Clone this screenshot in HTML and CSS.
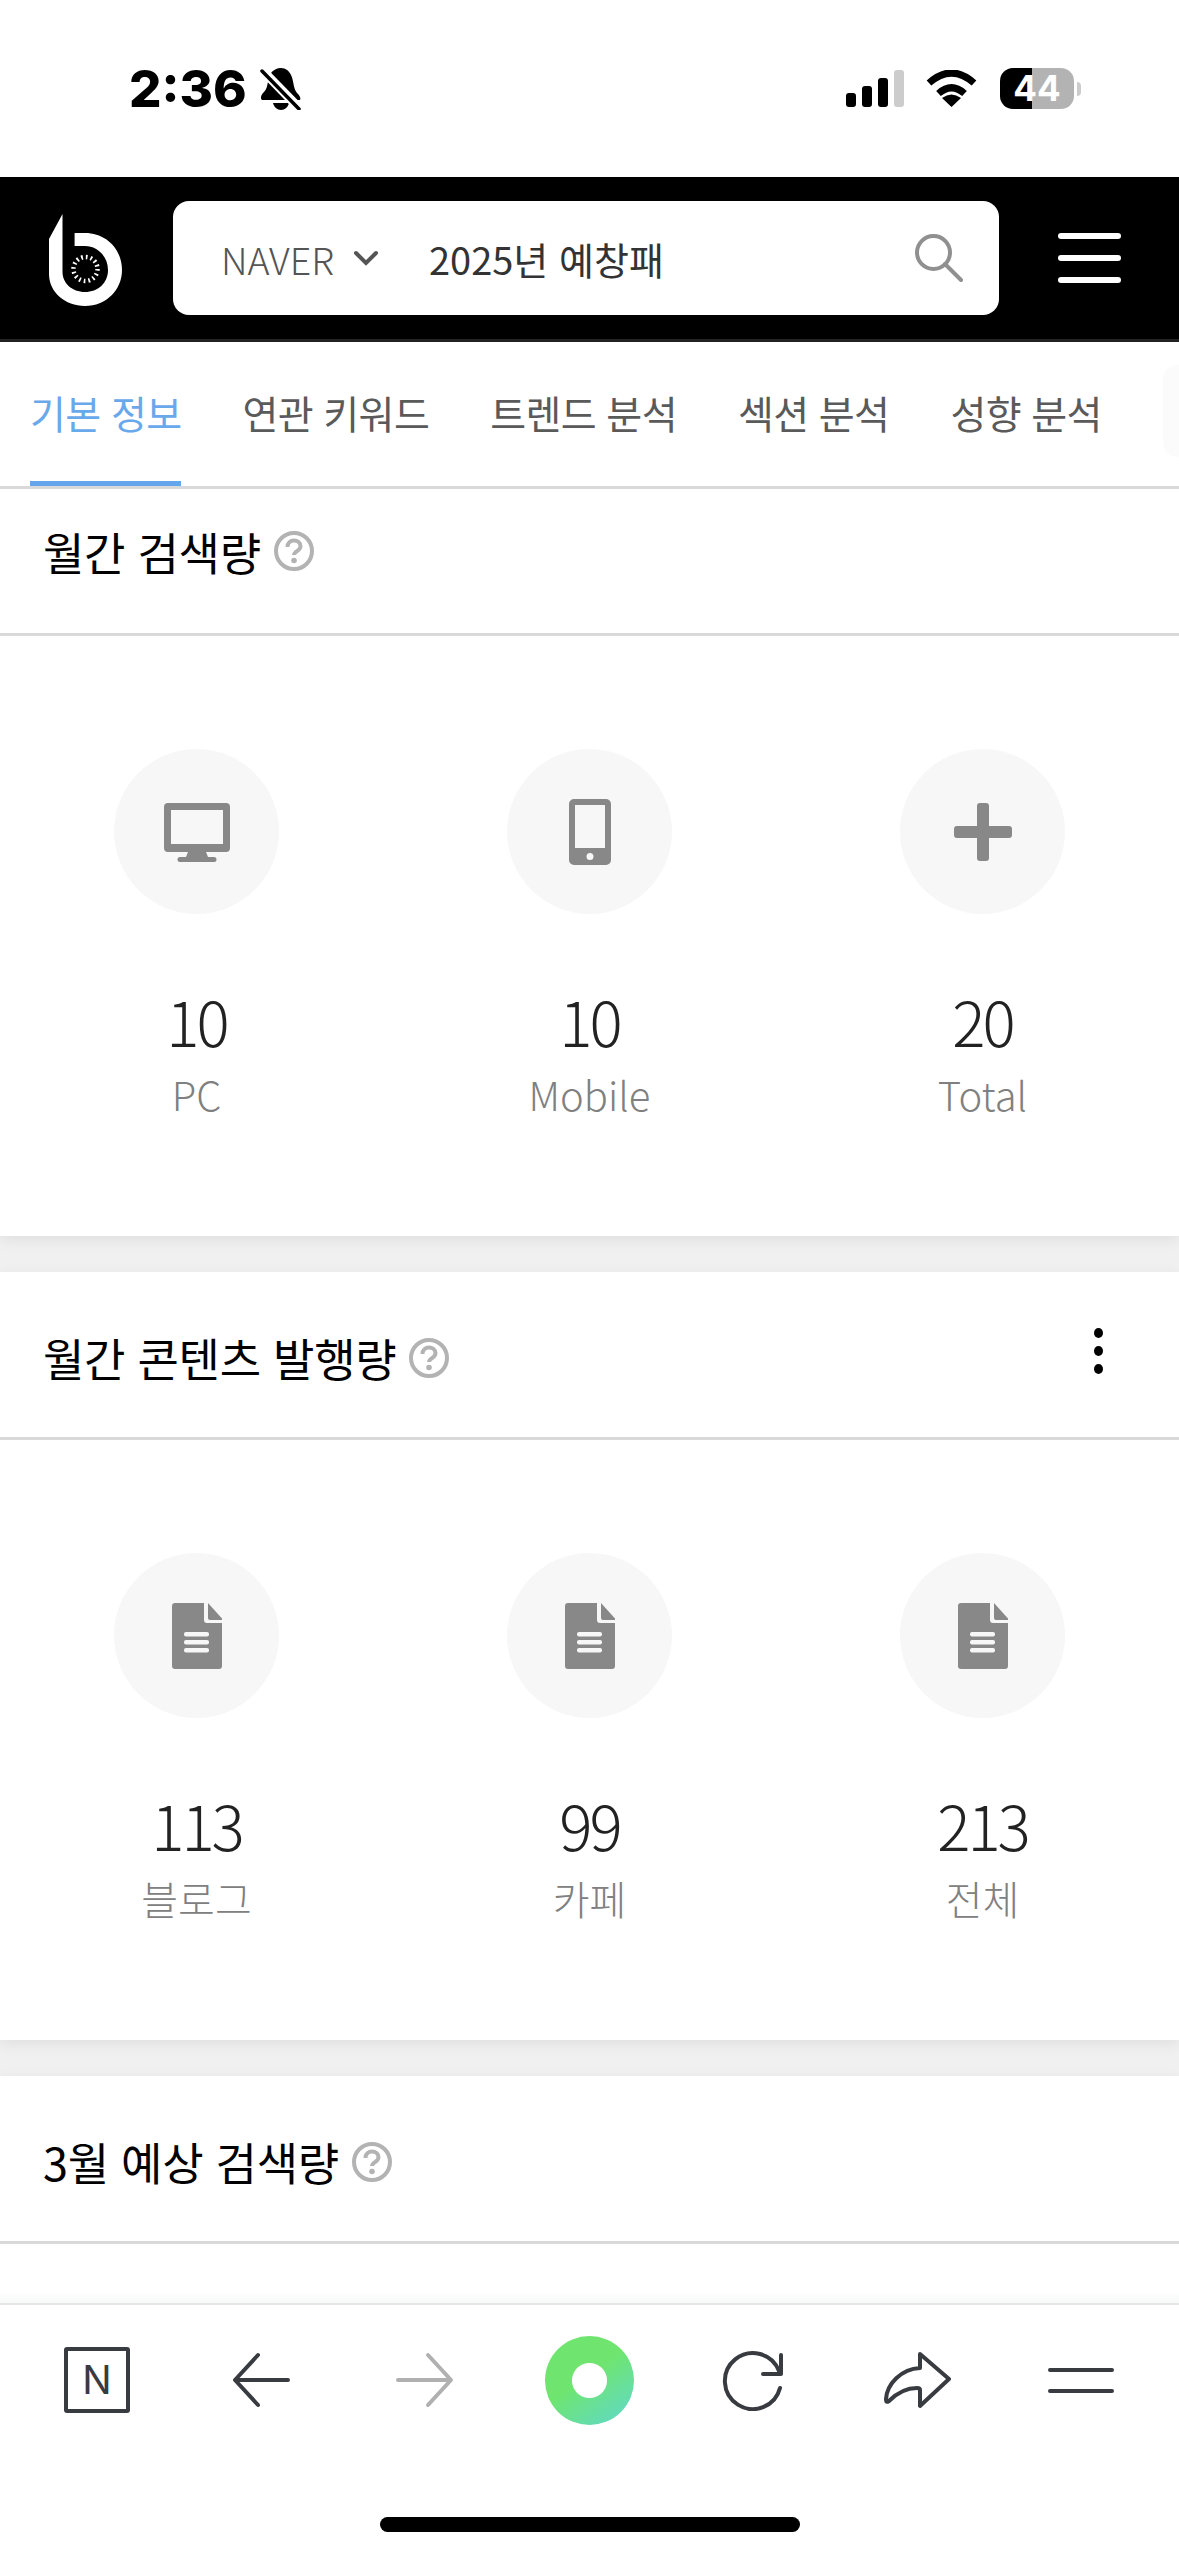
FILE: index.html
```html
<!DOCTYPE html>
<html lang="ko">
<head>
  <meta charset="UTF-8">
  <title>월간 검색량</title>
  <meta name="viewport" content="width=device-width, initial-scale=1.0">
  <link rel="stylesheet" href="styles.css">
</head>
<body>
  <div class="status-bar">
    <div class="status-left">
      <span class="clock">2:36</span>
      <svg class="bell" viewBox="0 0 41 42">
        <path d="M21 0c5 0 8 3 10 7 3 6 2 13 6 18 3 3 4 5 3 7H2c-2-2-1-5 2-8 5-5 3-14 7-19 2-3 6-5 10-5z"/>
        <path d="M13 35h16c-1 4-4 7-8 7s-7-3-8-7z"/>
        <path class="bell-cut" d="M3 3l36 37"/>
        <path class="bell-line" d="M2 3l37 38"/>
      </svg>
    </div>
    <div class="status-right">
      <div class="signal">
        <span class="bar1"></span>
        <span class="bar2"></span>
        <span class="bar3"></span>
        <span class="bar4"></span>
      </div>
      <svg class="wifi" viewBox="0 0 51 37">
        <path class="wifi-arc" d="M3 13Q25.5-7 48 13"/>
        <path class="wifi-arc" d="M12.500 23.500Q25.500 12 38.500 23.500"/>
        <path d="M25.500 37L16 28Q25.500 21 35 28Z"/>
      </svg>
      <div class="battery"><span>44</span></div>
      <div class="battery-tip"></div>
    </div>
  </div>

  <header class="top-header">
    <svg class="logo" viewBox="0 0 73 92">
      <path d="M13.500 0L0 25V60C0 78 16 92 36 92C57 92 73 76 73 56C73 35 57 19 36 19H25.600V32H36C49 32 59 43 59 56C59 69 49 78 36 78C23 78 13.500 69 13.500 58Z" fill="#fff"/>
      <circle class="logo-ticks" cx="36.500" cy="55" r="12"/>
    </svg>
    <div class="search-box">
      <span class="search-engine">NAVER</span>
      <svg class="chevron" viewBox="0 0 26 16"><path d="M3 3l10 10L23 3"/></svg>
      <span class="search-query">2025년 예창패</span>
      <svg class="search-icon" viewBox="0 0 48 48">
        <circle cx="18.500" cy="18.500" r="16.500"/>
        <path d="M30 30l16 16"/>
      </svg>
    </div>
    <div class="hamburger"><span></span><span></span><span></span></div>
  </header>

  <nav class="tabs">
    <a class="tab active">기본 정보</a>
    <a class="tab">연관 키워드</a>
    <a class="tab">트렌드 분석</a>
    <a class="tab">섹션 분석</a>
    <a class="tab">성향 분석</a>
    <div class="tab-peek"></div>
  </nav>

  <main class="content">
    <section class="card">
      <div class="card-head first">
        <h3>월간 검색량</h3>
        <svg class="help" viewBox="0 0 40 40"><use href="#help-icon"/></svg>
      </div>
      <div class="stats">
        <div class="stat">
          <div class="stat-icon">
            <svg class="ico-monitor" viewBox="0 0 66 59">
              <path fill-rule="evenodd" d="M4 0H62a4 4 0 0 1 4 4V45a4 4 0 0 1-4 4H42l2 5H50a2.500 2.500 0 0 1 0 5H16a2.500 2.500 0 0 1 0-5H22l2-5H4a4 4 0 0 1-4-4V4a4 4 0 0 1 4-4ZM7 7V41H59V7Z"/>
            </svg>
          </div>
          <div class="stat-num">10</div>
          <div class="stat-label">PC</div>
        </div>
        <div class="stat">
          <div class="stat-icon">
            <svg class="ico-phone" viewBox="0 0 42 66">
              <path fill-rule="evenodd" d="M5 0H37a5 5 0 0 1 5 5V61a5 5 0 0 1-5 5H5a5 5 0 0 1-5-5V5a5 5 0 0 1 5-5ZM6 6V49H36V6ZM21 54a3.500 3.500 0 1 0 0 7 3.500 3.500 0 0 0 0-7Z"/>
            </svg>
          </div>
          <div class="stat-num">10</div>
          <div class="stat-label">Mobile</div>
        </div>
        <div class="stat">
          <div class="stat-icon">
            <svg class="ico-plus" viewBox="0 0 58 58">
              <path d="M26 0h6a3 3 0 0 1 3 3V23H55a3 3 0 0 1 3 3v6a3 3 0 0 1-3 3H35V55a3 3 0 0 1-3 3h-6a3 3 0 0 1-3-3V35H3a3 3 0 0 1-3-3v-6a3 3 0 0 1 3-3H23V3a3 3 0 0 1 3-3Z"/>
            </svg>
          </div>
          <div class="stat-num">20</div>
          <div class="stat-label">Total</div>
        </div>
      </div>
    </section>

    <section class="card">
      <div class="card-head">
        <h3>월간 콘텐츠 발행량</h3>
        <svg class="help" viewBox="0 0 40 40"><use href="#help-icon"/></svg>
        <div class="more"><span></span><span></span><span></span></div>
      </div>
      <div class="stats">
        <div class="stat">
          <div class="stat-icon"><svg class="ico-doc" viewBox="0 0 50 66"><use href="#doc-icon"/></svg></div>
          <div class="stat-num">113</div>
          <div class="stat-label">블로그</div>
        </div>
        <div class="stat">
          <div class="stat-icon"><svg class="ico-doc" viewBox="0 0 50 66"><use href="#doc-icon"/></svg></div>
          <div class="stat-num">99</div>
          <div class="stat-label">카페</div>
        </div>
        <div class="stat">
          <div class="stat-icon"><svg class="ico-doc" viewBox="0 0 50 66"><use href="#doc-icon"/></svg></div>
          <div class="stat-num">213</div>
          <div class="stat-label">전체</div>
        </div>
      </div>
    </section>

    <section class="card">
      <div class="card-head">
        <h3>3월 예상 검색량</h3>
        <svg class="help" viewBox="0 0 40 40"><use href="#help-icon"/></svg>
      </div>
      <div class="stats"></div>
    </section>
  </main>

  <footer class="browser-bar">
    <div class="browser-icons">
      <div class="browser-btn"><div class="naver-box">N</div></div>
      <div class="browser-btn">
        <svg class="ico-arrow" viewBox="0 0 58 56"><path d="M56 28H4M26 3L3 28l23 25"/></svg>
      </div>
      <div class="browser-btn">
        <svg class="ico-arrow disabled" viewBox="0 0 58 56"><path d="M2 28H54M32 3l23 25-23 25"/></svg>
      </div>
      <div class="browser-btn"><div class="green-dot"></div></div>
      <div class="browser-btn">
        <svg class="ico-reload" viewBox="0 0 62 61"><path d="M58 38A28 28 0 1 1 57 21M59 5V24H41"/></svg>
      </div>
      <div class="browser-btn">
        <svg class="ico-share" viewBox="0 0 68 58"><path d="M37 3L66 28 37 55V39Q37 37 34 37C22 37 13 43 6 50 3 52 3 50 3 48 4 33 18 18 37 17Z"/></svg>
      </div>
      <div class="browser-btn"><div class="two-lines"><span></span><span></span></div></div>
    </div>
    <div class="home-indicator"></div>
  </footer>

  <svg class="icon-defs">
    <defs>
      <g id="help-icon">
        <circle cx="20" cy="20" r="18" fill="none" stroke="#b3b3b3" stroke-width="4"/>
        <path d="M13.500 16c0-4 3-6.500 6.500-6.500s6.500 2.300 6.500 5.800c0 4.700-6.500 4.700-6.500 8.700" fill="none" stroke="#b3b3b3" stroke-width="4"/>
        <circle cx="20" cy="29.500" r="2.800" fill="#b3b3b3"/>
      </g>
      <g id="doc-icon">
        <path d="M3 0H32V17a3 3 0 0 0 3 3H50V63a3 3 0 0 1-3 3H3a3 3 0 0 1-3-3V3a3 3 0 0 1 3-3Z" fill="#888"/>
        <path d="M36 0L50 15.500V17H38a2 2 0 0 1-2-2Z" fill="#888"/>
        <rect x="12" y="29" width="25" height="4.500" rx="2" fill="#f7f7f7"/>
        <rect x="12" y="37" width="25" height="4.500" rx="2" fill="#f7f7f7"/>
        <rect x="12" y="45" width="25" height="4.500" rx="2" fill="#f7f7f7"/>
      </g>
    </defs>
  </svg>
</body>
</html>
```

FILE: styles.css
```css
* {
  box-sizing: border-box;
}

html,
body {
  margin: 0;
  height: 2556px;
  overflow: hidden;
}

body {
  display: flex;
  flex-direction: column;
  background: #fff;
  color: #000;
  font-family: "Noto Sans CJK KR", "Noto Sans", sans-serif;
}

/* status bar */
.status-bar {
  display: flex;
  justify-content: space-between;
  align-items: center;
  flex: 0 0 177px;
  padding: 0 98px 0 129px;
}

.status-left {
  display: flex;
  align-items: center;
  gap: 13px;
}

.clock {
  font-family: Inter, sans-serif;
  font-size: 51px;
  font-weight: 800;
  line-height: 1;
}

.bell {
  width: 41px;
  height: 42px;
}

.bell-cut {
  fill: none;
  stroke: #fff;
  stroke-width: 9;
}

.bell-line {
  fill: none;
  stroke: #000;
  stroke-width: 3.500;
  stroke-linecap: round;
}

.status-right {
  display: flex;
  align-items: center;
}

.signal {
  display: flex;
  align-items: flex-end;
  gap: 6px;
  height: 37px;
  margin-right: 22px;
}

.signal span {
  width: 10px;
  border-radius: 3px;
  background: #000;
}

.bar1 { height: 14px; }
.bar2 { height: 21px; }
.bar3 { height: 29px; }
.signal .bar4 { height: 37px; background: #ccc; }

.wifi {
  width: 51px;
  height: 37px;
  margin-right: 23px;
}

.wifi-arc {
  fill: none;
  stroke: #000;
  stroke-width: 7;
}

.battery {
  width: 74px;
  height: 41px;
  border-radius: 13px;
  background: linear-gradient(90deg, #000 43.500%, #b3b3b3 43.500%);
  color: #fff;
  font-family: Inter, sans-serif;
  font-size: 35px;
  font-weight: 700;
  line-height: 41px;
  text-align: center;
}

.battery-tip {
  width: 4px;
  height: 14px;
  margin-left: 3px;
  border-radius: 0 7px 7px 0;
  background: #ccc;
}

/* header */
.top-header {
  display: flex;
  align-items: center;
  flex: 0 0 165px;
  padding-left: 49px;
  background: #000;
  border-bottom: 3px solid #222;
}

.logo {
  flex: none;
  width: 73px;
  height: 92px;
  margin-top: 4px;
}

.logo-ticks {
  fill: none;
  stroke: #fff;
  stroke-width: 4.500;
  stroke-dasharray: 1.700 3.012;
}

.search-box {
  display: flex;
  align-items: center;
  flex: none;
  width: 826px;
  height: 114px;
  margin-left: 51px;
  padding: 0 36px 0 48px;
  background: #fff;
  border-radius: 16px;
}

.search-engine {
  font-size: 37.500px;
  font-weight: 300;
  color: #555;
}

.chevron {
  width: 26px;
  height: 16px;
  margin-left: 19px;
  fill: none;
  stroke: #555;
  stroke-width: 4;
  stroke-linecap: round;
}

.search-query {
  margin-left: 50px;
  font-size: 38px;
  font-weight: 400;
  color: #333;
}

.search-icon {
  width: 48px;
  height: 48px;
  margin-left: auto;
  fill: none;
  stroke: #909090;
  stroke-width: 4;
  stroke-linecap: round;
}

.hamburger {
  display: flex;
  flex-direction: column;
  gap: 16px;
  width: 63px;
  margin-left: 59px;
}

.hamburger span {
  height: 6px;
  border-radius: 3px;
  background: #fff;
}

/* tabs */
.tabs {
  position: relative;
  display: flex;
  gap: 61px;
  flex: 0 0 147px;
  padding-left: 30px;
  border-bottom: 3px solid #d9d9d9;
}

.tab {
  display: flex;
  align-items: center;
  height: 144px;
  border-bottom: 5px solid transparent;
  font-size: 39px;
  font-weight: 400;
  color: #5a5a5a;
  letter-spacing: -0.6px;
  white-space: nowrap;
}

.tab.active {
  color: #6aa8ec;
  border-bottom-color: #64a5ec;
}

.tab-peek {
  position: absolute;
  top: 23px;
  right: -20px;
  width: 36px;
  height: 92px;
  border-radius: 14px;
  background: #fbfbfb;
}

/* cards */
.content {
  flex: 1;
  overflow: hidden;
  background: #f0f0f0;
}

.card {
  margin-bottom: 36px;
  background: #fff;
  box-shadow: 0 4px 14px rgba(0, 0, 0, 0.07);
}

.card-head {
  display: flex;
  align-items: center;
  gap: 13px;
  height: 168px;
  padding: 6px 43px 0;
  border-bottom: 3px solid #d9d9d9;
}

.card-head.first {
  height: 147px;
  padding-top: 0;
  padding-bottom: 20px;
}

.card-head h3 {
  margin: 0;
  font-size: 45px;
  font-weight: 400;
  letter-spacing: -0.3px;
  white-space: nowrap;
}

.help {
  width: 40px;
  height: 40px;
}

.more {
  display: flex;
  flex-direction: column;
  gap: 8px;
  margin-left: auto;
  margin-right: 33px;
  margin-top: -14px;
}

.more span {
  width: 9px;
  height: 10px;
  border-radius: 50%;
  background: #000;
}

.stats {
  display: grid;
  grid-template-columns: repeat(3, 393px);
  height: 600px;
  padding-top: 113px;
}

.stat {
  display: flex;
  flex-direction: column;
  align-items: center;
}

.stat-icon {
  display: flex;
  justify-content: center;
  align-items: center;
  width: 165px;
  height: 165px;
  border-radius: 50%;
  background: #f7f7f7;
}

.stat-icon svg {
  fill: #888;
}

.ico-monitor { width: 66px; height: 59px; margin-top: 2px; }
.ico-phone { width: 42px; height: 66px; }
.ico-plus { width: 58px; height: 58px; }
.ico-doc { width: 50px; height: 66px; }

.stat-num {
  margin-top: 70px;
  font-size: 62px;
  font-weight: 300;
  line-height: 72px;
  color: #222;
  letter-spacing: -3px;
}

.stat-label {
  margin-top: 10px;
  font-size: 40px;
  font-weight: 300;
  line-height: 56px;
  color: #808080;
}

/* browser toolbar */
.browser-bar {
  position: relative;
  flex: 0 0 253px;
  background: #fff;
  border-top: 2px solid #e6e6e6;
}

.browser-bar::before {
  content: "";
  position: absolute;
  left: 0;
  right: 0;
  top: -14px;
  height: 12px;
  background: linear-gradient(#fff, #f7f8f8);
}

.browser-icons {
  display: grid;
  grid-template-columns: repeat(7, 164px);
  height: 150px;
  padding-left: 15px;
}

.browser-btn {
  display: flex;
  justify-content: center;
  align-items: center;
}

.naver-box {
  width: 66px;
  height: 66px;
  border: 4px solid #383b40;
  border-radius: 3px;
  color: #383b40;
  font-family: Inter, sans-serif;
  font-size: 39px;
  line-height: 57px;
  text-align: center;
}

.ico-arrow {
  width: 58px;
  height: 56px;
  fill: none;
  stroke: #383b40;
  stroke-width: 4;
  stroke-linecap: round;
  stroke-linejoin: round;
}

.ico-arrow.disabled {
  stroke: #b0b0b0;
}

.green-dot {
  width: 89px;
  height: 89px;
  border-radius: 50%;
  background: radial-gradient(circle at center, #fff 17px, transparent 18px),
    linear-gradient(145deg, #6fe56f 45%, #5fd8d0 100%);
}

.ico-reload {
  width: 62px;
  height: 61px;
  fill: none;
  stroke: #383b40;
  stroke-width: 4;
  stroke-linecap: round;
  stroke-linejoin: round;
}

.ico-share {
  width: 68px;
  height: 58px;
  fill: none;
  stroke: #383b40;
  stroke-width: 4;
  stroke-linejoin: round;
}

.two-lines {
  display: flex;
  flex-direction: column;
  gap: 17px;
  width: 66px;
}

.two-lines span {
  height: 4px;
  border-radius: 2px;
  background: #383b40;
}

.home-indicator {
  width: 420px;
  height: 15px;
  margin: 62px auto 0;
  border-radius: 8px;
  background: #000;
}

.icon-defs {
  position: absolute;
  width: 0;
  height: 0;
}
```
